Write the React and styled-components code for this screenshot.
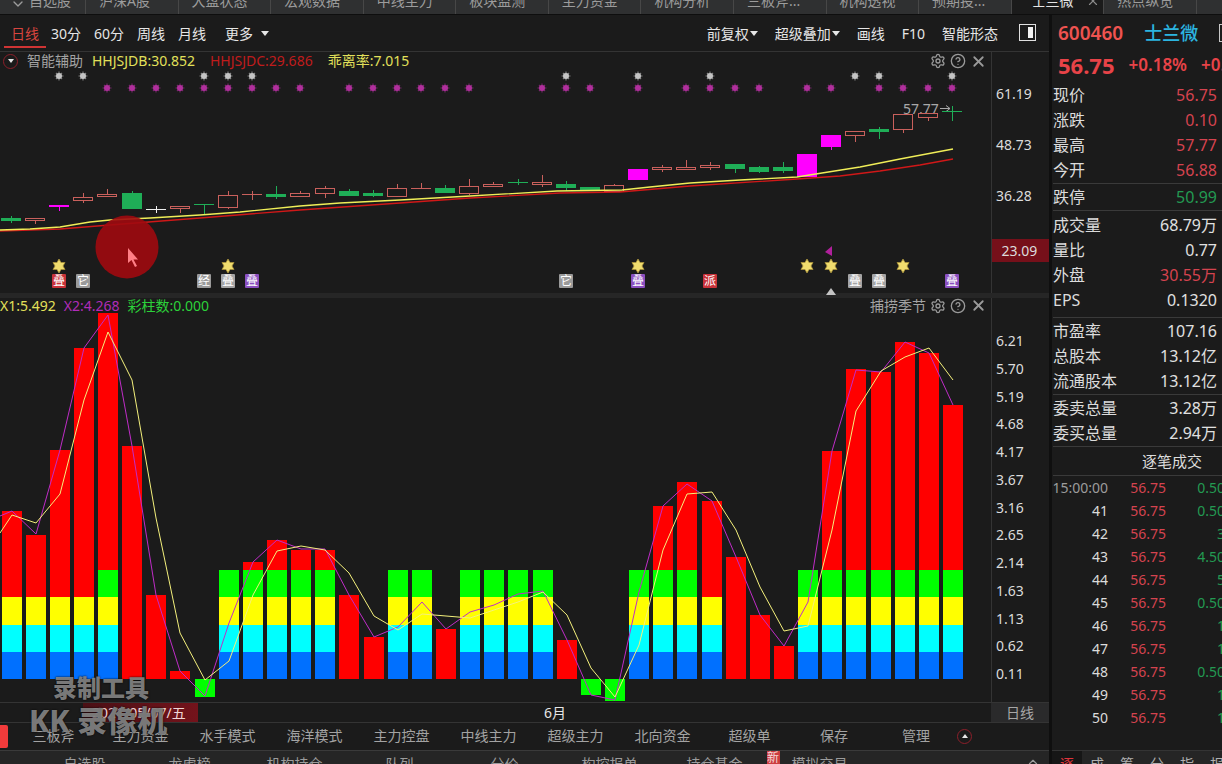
import React from 'react';
import styled, { createGlobalStyle } from 'styled-components';
import { Settings, CircleHelp, X, ChevronDown, ChevronUp } from 'lucide-react';

const GlobalStyle = createGlobalStyle`
    * {
        box-sizing: border-box;
    }
    body {
        margin: 0;
        background: #1b1b1b;
        color: #dcdcdc;
        font-family: "Noto Sans", "Noto Sans CJK SC", sans-serif;
        font-size: 14px;
        line-height: 20px;
        overflow: hidden;
    }
    button {
        border: 0;
        padding: 0;
        background: none;
        color: inherit;
        font: inherit;
        white-space: nowrap;
        cursor: pointer;
    }
`;

const Page = styled.div`
    display: flex;
    flex-direction: column;
    min-height: 100vh;
    overflow: hidden;
`;

const TopTabs = styled.nav`
    display: flex;
    height: 15px;
    overflow: hidden;
    background: #2f3031;
    border-bottom: 1px solid #0e0e0e;
`;

const TopTab = styled.button`
    display: flex;
    align-items: flex-end;
    flex: 0 0 ${({ $first }) => ($first ? '86px' : 'calc(100% / 13.2)')};
    height: 14px;
    padding-left: ${({ $first, $active }) => ($first ? 10 : $active ? 20 : 13)}px;
    border-right: 1px solid #474747;
    line-height: 26px;
    color: ${({ $active }) => ($active ? '#e4e4e4' : '#9c9c9c')};
    background: ${({ $active }) => ($active ? '#1b1b1b' : 'transparent')};
    svg {
        margin: 0 3px 2px 0;
    }
    .close {
        margin: 0 0 6px 12px;
        color: #8c8c8c;
    }
`;

const Main = styled.div`
    display: flex;
    flex: 1;
`;

const Left = styled.main`
    position: relative;
    flex: 1;
    min-width: 0;
`;

const Toolbar = styled.div`
    display: flex;
    align-items: center;
    justify-content: space-between;
    height: 37px;
    padding: 0 13px 0 4px;
    border-bottom: 1px solid #343434;
    color: #e6e6e6;
`;

const Group = styled.div`
    display: flex;
    align-items: center;
    gap: ${({ $gap }) => $gap}px;
`;

const Period = styled.button`
    height: 29px;
    padding: 4px ${({ $active }) => ($active ? 7 : 0)}px 0;
    margin-right: ${({ $active }) => ($active ? -8 : 0)}px;
    color: ${({ $active }) => ($active ? '#d8453f' : 'inherit')};
    border-bottom: 2px solid ${({ $active }) => ($active ? '#cf3434' : 'transparent')};
    line-height: 20px;
`;

const Tool = styled.button`
    display: flex;
    align-items: center;
    gap: 1px;
    padding-top: 1px;
`;

const MoreTool = styled(Tool)`
    gap: 8px;
    padding-left: 6px;
`;

const PanelTool = styled(Tool)`
    padding: 0 0 2px 4px;
`;

const Arrow = styled.span`
    border: 4px solid transparent;
    border-top: 5px solid #e6e6e6;
    border-bottom: 0;
`;

const PanelIcon = styled.span`
    display: flex;
    justify-content: flex-end;
    width: 17px;
    height: 17px;
    padding: 2px;
    border: 1px solid #e0e0e0;
    &::after {
        content: "";
        width: 5px;
        background: #f2f2f2;
    }
`;

const Panel = styled.section`
    display: flex;
    border-bottom: ${({ $divided }) => ($divided ? '5px solid #262626' : '0')};
`;

const Plot = styled.div`
    flex: 1;
    min-width: 0;
`;

const PlotHead = styled.header`
    display: flex;
    align-items: center;
    justify-content: space-between;
    height: ${({ $height }) => $height}px;
    padding: 0 4px ${({ $height }) => ($height > 15 ? 2 : 0)}px ${({ $inset }) => $inset}px;
    line-height: 18px;
`;

const Legend = styled.span`
    color: ${({ $color }) => $color};
    white-space: nowrap;
`;

const HeadButton = styled.button`
    display: flex;
    color: #9a9a9a;
`;

const Chart = styled.svg`
    display: block;
    width: 100%;
    height: auto;
    overflow: visible;
`;

const Round = styled.span`
    display: flex;
    align-items: center;
    justify-content: center;
    width: 15px;
    height: 15px;
    border: 1px solid #8c1f2a;
    border-radius: 50%;
    &::after {
        content: "";
        border: 3px solid transparent;
        border-${({ $up }) => ($up ? 'bottom' : 'top')}: 4px solid #e8e8e8;
        border-${({ $up }) => ($up ? 'top' : 'bottom')}: 0;
    }
`;

const Axis = styled.div`
    position: relative;
    display: flex;
    flex-direction: column;
    justify-content: ${({ $spread }) => ($spread ? 'space-between' : 'flex-start')};
    gap: ${({ $spread }) => ($spread ? 0 : 31)}px;
    width: 58px;
    padding: ${({ $spread }) => ($spread ? '33px 4px 18px' : '32px 4px 0')};
    border-left: 1px solid #343434;
`;

const PriceTag = styled.span`
    position: absolute;
    left: 0;
    right: 0;
    bottom: 31px;
    padding-right: 2px;
    text-align: center;
    line-height: 23px;
    background: #76101a;
`;

const DateBar = styled.div`
    display: flex;
    height: 20px;
    border-top: 1px solid #343434;
`;

const DateTag = styled.span`
    flex: 0 0 115px;
    margin-left: 83px;
    padding-left: 9px;
    background: linear-gradient(90deg, #4a1015, #74131b);
    color: #f0d6d6;
`;

const Month = styled.span`
    flex: 1;
    padding-left: 346px;
    color: #e6e6e6;
`;

const PeriodTag = styled.span`
    flex: 0 0 58px;
    text-align: center;
    color: #a6a6a6;
    background: #2a2a2b;
`;

const Schemes = styled.nav`
    display: flex;
    align-items: center;
    height: 28px;
    padding-bottom: 1px;
    border-top: 1px solid #343434;
    color: #a3a3a3;
`;

const RedMark = styled.span`
    width: 8px;
    height: 23px;
    margin-right: 2px;
    border-radius: 0 2px 2px 0;
    background: #f23b3b;
`;

const Scheme = styled.button`
    flex: 0 0 ${({ $short }) => ($short ? 82 : 87)}px;
`;

const BottomBar = styled.nav`
    display: flex;
    height: 14px;
    overflow: hidden;
    padding-left: 32px;
    border-top: 1px solid #3a3a3a;
    background: #252525;
    color: #9c9c9c;
`;

const BottomTab = styled.button`
    flex: 0 0 105px;
    height: 26px;
`;

const NewBadge = styled.span`
    width: 13px;
    height: 14px;
    margin-right: -13px;
    background: #cc3d3f;
    color: #f4dada;
    font-size: 12px;
    line-height: 14px;
`;

const BarToggle = styled.button`
    height: 26px;
    margin: 0 9px 0 auto;
`;

const Watermark = styled.div`
    position: absolute;
    left: 29px;
    bottom: 25px;
    color: rgba(160, 160, 160, 0.75);
    font-weight: 800;
    font-size: 30px;
    line-height: 36px;
    text-shadow: 0 0 2px #000;
    pointer-events: none;
    small {
        display: block;
        padding-left: 24px;
        font-size: 24px;
        line-height: 30px;
    }
`;

const Side = styled.aside`
    flex: 0 0 173px;
    display: flex;
    flex-direction: column;
    overflow: hidden;
    border-left: 3px solid #0f0f0f;
    white-space: nowrap;
`;

const Stock = styled.div`
    display: flex;
    align-items: center;
    gap: 21px;
    height: 36px;
    padding: 0 0 0 6px;
    font-size: 19px;
    font-weight: 600;
    color: #ef5350;
    b {
        font-size: 18px;
        font-weight: 500;
        color: #2cb5e0;
    }
    i {
        flex: 0 0 18px;
        height: 18px;
        border: 1px solid #c8c8c8;
    }
`;

const Price = styled.div`
    display: flex;
    align-items: center;
    gap: 14px;
    height: 31px;
    padding: 0 0 3px 6px;
    font-size: 17px;
    font-weight: 600;
    color: #e84348;
    strong {
        font-size: 22px;
        font-weight: 700;
    }
`;

const Quotes = styled.dl`
    margin: 0 0 0 1px;
    padding: ${({ $loose }) => ($loose ? '2px 5px 4px 0' : '1px 5px 0 0')};
    border-bottom: 1px solid #3a3a3a;
    font-size: 16px;
    line-height: 25px;
    div {
        display: flex;
        justify-content: space-between;
    }
`;

const Quote = styled.dd`
    margin: 0;
    color: ${({ $tone }) => ({ up: '#d5434f', down: '#239a52' }[$tone] || '#e0e0e0')};
`;

const TickTitle = styled.h2`
    margin: 0 0 0 1px;
    padding-left: 89px;
    border-bottom: 1px solid #3a3a3a;
    font-size: 15px;
    font-weight: 400;
    line-height: 28px;
`;

const Ticks = styled.table`
    width: calc(100% + 3px);
    border-collapse: collapse;
    td {
        height: 23px;
        padding: 0;
        text-align: right;
    }
    td:first-child {
        width: 56px;
    }
    td:nth-child(2) {
        width: 58px;
        color: #d5434f;
    }
    td:last-child {
        color: #239a52;
    }
    tr:first-child td:first-child {
        color: #9c9c9c;
    }
`;

const SideTabs = styled.nav`
    display: flex;
    height: 14px;
    margin-top: auto;
    overflow: hidden;
    border-top: 1px solid #343434;
    background: #252525;
    color: #b0b0b0;
`;

const SideTab = styled.button`
    flex: 0 0 30px;
    height: 26px;
    color: ${({ $active }) => ($active ? '#e0343c' : 'inherit')};
    background: ${({ $active }) => ($active ? '#161616' : 'transparent')};
`;

const topTabs = ['自选股', '沪深A股', '大盘状态', '宏观数据', '中线主力', '板块监测', '主力资金', '机构分析', '三板斧...', '机构透视', '预期投...', '士兰微', '热点纵览'];
const periods = ['日线', '30分', '60分', '周线', '月线'];
const schemes = ['三板斧', '主力资金', '水手模式', '海洋模式', '主力控盘', '中线主力', '超级主力', '北向资金', '超级单', '保存', '管理'];
const bottomTabs = ['自选股', '龙虎榜', '机构持仓', '队列', '分价', '构控报单', '持仓基金'];
const sideTabs = ['逐', '成', '筹', '分', '指', '报'];

const quotes = [
    [['现价', '56.75', 'up'], ['涨跌', '0.10', 'up'], ['最高', '57.77', 'up'], ['今开', '56.88', 'up']],
    [['跌停', '50.99', 'down']],
    [['成交量', '68.79万'], ['量比', '0.77'], ['外盘', '30.55万', 'up'], ['EPS', '0.1320']],
    [['市盈率', '107.16'], ['总股本', '13.12亿'], ['流通股本', '13.12亿']],
    [['委卖总量', '3.28万'], ['委买总量', '2.94万']],
];

const ticks = [
    ['15:00:00', '0.50'], ['41', '0.50'], ['42', '3'], ['43', '4.50'], ['44', '5'], ['45', '0.50'],
    ['46', '1'], ['47', '1'], ['48', '0.50'], ['49', '1'], ['50', '1'],
];

const levels = ['6.21', '5.70', '5.19', '4.68', '4.17', '3.67', '3.16', '2.65', '2.14', '1.63', '1.13', '0.62', '0.11'];

const RED = '#c9605c';
const GREEN = '#1fae57';
const PINK = '#ff00ff';

// kind, body top, body bottom, high, low
const candles = [
    ['g', 218, 221, 216, 223], ['r', 218, 221, 218, 224], ['m', 205, 207, 205, 211], ['r', 197, 201, 193, 203],
    ['r', 194, 197, 189, 197], ['g', 193, 209, 191, 209], ['w', 209, 210, 206, 213], ['r', 206, 209, 206, 213],
    ['g', 204, 205, 204, 214], ['r', 195, 208, 191, 209], ['r', 194, 194, 191, 200], ['g', 194, 197, 186, 199],
    ['r', 193, 197, 191, 197], ['r', 188, 194, 186, 198], ['g', 191, 196, 189, 196], ['g', 193, 196, 190, 197],
    ['r', 188, 197, 184, 197], ['r', 188, 188, 183, 189], ['g', 188, 193, 185, 193], ['r', 186, 194, 179, 195],
    ['r', 184, 187, 182, 187], ['g', 182, 183, 179, 185], ['r', 182, 185, 175, 187], ['g', 184, 188, 181, 191],
    ['g', 187, 190, 187, 190], ['r', 185, 192, 184, 192], ['m', 169, 180, 169, 180], ['r', 167, 170, 165, 172],
    ['r', 167, 170, 160, 170], ['r', 165, 168, 162, 170], ['g', 164, 169, 164, 173], ['g', 167, 172, 166, 173],
    ['g', 167, 171, 162, 173], ['m', 154, 177, 154, 177], ['m', 135, 147, 135, 150], ['r', 131, 136, 131, 142],
    ['g', 129, 132, 127, 139], ['r', 114, 130, 114, 133], ['r', 113, 118, 113, 121], ['g', 111, 112, 106, 121],
];

const greySnow = [2, 3, 8, 9, 10, 23, 26, 29, 35, 36, 39];
const pinkSnow = [4, 5, 6, 7, 8, 9, 10, 11, 12, 14, 15, 16, 17, 18, 19, 22, 23, 24, 26, 28, 29, 30, 31, 33, 34, 36, 37, 38, 39];
const stars = [2, 9, 26, 33, 34, 37];
const badges = [
    [2, '叠', '#c8323a'], [3, '它', '#9a9a9a'], [8, '经', '#9a9a9a'], [9, '叠', '#a4a4a4'], [10, '叠', '#8a4fc0'],
    [23, '它', '#9a9a9a'], [26, '叠', '#8a4fc0'], [29, '派', '#c8323a'], [35, '叠', '#a4a4a4'], [36, '叠', '#a4a4a4'], [39, '叠', '#8a4fc0'],
];

// bar top, number of coloured blocks
const bars = [
    [511, 3], [535, 3], [450, 3], [348, 3], [313, 4], [446, 0], [595, 0], [671, 0], [697, 0], [570, 4],
    [562, 4], [540, 4], [550, 4], [550, 4], [595, 0], [637, 0], [570, 4], [570, 4], [629, 0], [570, 4],
    [570, 4], [570, 4], [570, 4], [640, 0], [695, 0], [701, 0], [570, 4], [506, 4], [482, 4], [501, 3],
    [557, 0], [615, 0], [646, 0], [570, 4], [451, 4], [369, 4], [372, 4], [342, 4], [353, 4], [405, 4],
];
const blocks = [[652, 27, '#0070ff'], [625, 27, '#00ffff'], [597, 28, '#ffff00'], [570, 27, '#00ff00']];
const x2 = [511, 534, 450, 348, 315, 446, 595, 671, 696, 623, 562, 540, 549, 549, 595, 637, 627, 602, 629, 612, 605, 594, 591, 640, 695, 700, 592, 506, 484, 501, 557, 615, 646, 602, 451, 370, 372, 342, 353, 405];
const x1 = [515, 523, 494, 400, 332, 380, 518, 633, 680, 661, 595, 551, 546, 550, 573, 616, 630, 614, 616, 618, 610, 602, 592, 615, 668, 697, 645, 550, 494, 492, 530, 587, 631, 626, 530, 411, 371, 357, 348, 380];

const dayX = (i) => 11 + Math.round(i * 24.12);
const barX = (i) => 12 + Math.floor(i * 24.14);
const toPoints = (list, first) => `0,${first} ` + list.map((y, i) => `${barX(i)},${y}`).join(' ');

const Candle = ({ x, data }) => {
    const [kind, top, bottom, high, low] = data;
    const color = { r: RED, g: GREEN, m: PINK, w: '#f0f0f0' }[kind];
    return (
        <g shapeRendering="crispEdges">
            <line x1={x + 0.5} x2={x + 0.5} y1={high} y2={low} stroke={color} />
            {kind === 'r' ?
                <rect x={x - 9.5} y={top + 0.5} width="19" height={Math.max(bottom - top - 1, 0.01)} fill="#1b1b1b" stroke={color} /> :
                <rect x={x - 10} y={top} width="20" height={bottom - top} fill={color} />}
        </g>
    );
};

const Snow = ({ x, y, color }) => (
    <g stroke={color} strokeWidth="1.2">
        <circle cx={x} cy={y} r="3" fill={color} stroke="none" />
        <path d={`M${x - 4.5} ${y}h9M${x} ${y - 4.5}v9M${x - 3} ${y - 3}l6 6M${x + 3} ${y - 3}l-6 6`} opacity="0.6" />
    </g>
);

const Star = ({ x, y }) => (
    <path
        d={`M${x} ${y - 7}l2 3.5h4l-2 3.5 2 3.5h-4l-2 3.5-2-3.5h-4l2-3.5-2-3.5h4z`}
        fill="#f0dc6e"
        stroke="#a8913a"
        strokeWidth="0.8"
    />
);

const PriceChart = () => (
    <Chart viewBox="0 72 991 221" role="img" aria-label="K线">
        {greySnow.map((i) => <Snow key={i} x={dayX(i)} y={76} color="#c4c4c4" />)}
        {pinkSnow.map((i) => <Snow key={i} x={dayX(i)} y={88} color="#b0309c" />)}
        <text x="903" y="114" fontSize="14" fill="#a8a8a8">57.77</text>
        <path d="M940 108.5h10M946 105.5l4 3-4 3" fill="none" stroke="#a8a8a8" />
        {candles.map((c, i) => <Candle key={i} x={dayX(i)} data={c} />)}
        <polyline
            points="0,231 60,229 110,225 200,218 300,210 400,203 470,198 560,193 620,192 690,186 797,179 840,176 880,171 920,165 953,159"
            fill="none" stroke="#d01818" strokeWidth="1.3"
        />
        <polyline
            points="0,230 30,229 60,227 90,222 110,220 150,218 200,215 240,212 300,206 340,203 400,200 470,196 557,191 622,190 650,187 690,183 740,180 797,177 822,173 860,167 900,159 953,149"
            fill="none" stroke="#f0ee58" strokeWidth="1.3"
        />
        <circle cx="127" cy="247" r="31.5" fill="#a00a10" opacity="0.9" />
        <path d="M128 248v15l3.500-3 3.500 7 2-1-3.500-6.500h4.500z" fill="#ff7f86" />
        {stars.map((i) => <Star key={i} x={dayX(i)} y={266} />)}
        {badges.map(([i, label, color]) => (
            <g key={i}>
                <rect x={dayX(i) - 7} y="274" width="14" height="14" rx="1" fill={color} />
                <text x={dayX(i)} y="285" fontSize="12" textAnchor="middle" fill="#fff">{label}</text>
            </g>
        ))}
        <path d="M832 246v10l-7-4z" fill="#b0209c" />
        <path d="M831 288l5 7h-10z" fill="#c4c4c4" />
    </Chart>
);

const SeasonChart = () => (
    <Chart viewBox="0 313 991 389" role="img" aria-label="捕捞季节">
        <g shapeRendering="crispEdges">
            {bars.map(([top, count], i) => (
                <g key={i}>
                    <rect
                        x={barX(i) - 10} width="20"
                        y={Math.min(top, 679)} height={Math.abs(679 - top)}
                        fill={top > 679 ? '#00ff00' : '#ff0000'}
                    />
                    {blocks.slice(0, count).map(([y, h, color]) => (
                        <rect key={y} x={barX(i) - 10} y={y} width="20" height={h} fill={color} />
                    ))}
                </g>
            ))}
        </g>
        <polyline points={toPoints(x2, 516)} fill="none" stroke="#c02cc8" />
        <polyline points={toPoints(x1, 533)} fill="none" stroke="#f4f07c" />
    </Chart>
);

const HeadTools = ({ title }) => (
    <Group $gap={4}>
        {title && <Legend $color="#a3a3a3">{title}</Legend>}
        <HeadButton aria-label="设置"><Settings size={16} strokeWidth={2} /></HeadButton>
        <HeadButton aria-label="帮助"><CircleHelp size={16} strokeWidth={2} /></HeadButton>
        <HeadButton aria-label="关闭"><X size={17} strokeWidth={2.5} /></HeadButton>
    </Group>
);

const App = () => {
    return (
        <React.Fragment>
            <GlobalStyle />
            <Page>
                <TopTabs>
                    {topTabs.map((name, i) => (
                        <TopTab key={name} $first={i === 0} $active={name === '士兰微'}>
                            {i === 0 && <ChevronDown size={16} />}
                            {name}
                            {name === '士兰微' && <X className="close" size={14} />}
                        </TopTab>
                    ))}
                </TopTabs>
                <Main>
                    <Left>
                        <Toolbar>
                            <Group $gap={13}>
                                {periods.map((name, i) => <Period key={name} $active={i === 0}>{name}</Period>)}
                                <MoreTool>更多<Arrow /></MoreTool>
                            </Group>
                            <Group $gap={17}>
                                <Tool>前复权<Arrow /></Tool>
                                <Tool>超级叠加<Arrow /></Tool>
                                <Tool>画线</Tool>
                                <Tool>F10</Tool>
                                <Tool>智能形态</Tool>
                                <PanelTool aria-label="侧栏"><PanelIcon /></PanelTool>
                            </Group>
                        </Toolbar>
                        <Panel $divided>
                            <Plot>
                                <PlotHead $height={20} $inset={3}>
                                    <Group $gap={15}>
                                        <Group $gap={9}>
                                            <Round />
                                            <Legend $color="#a3a3a3">智能辅助</Legend>
                                            <Legend $color="#e2e05a">HHJSJDB:30.852</Legend>
                                        </Group>
                                        <Legend $color="#c01c1c">HHJSJDC:29.686</Legend>
                                        <Legend $color="#e2e05a">乖离率:7.015</Legend>
                                    </Group>
                                    <HeadTools />
                                </PlotHead>
                                <PriceChart />
                            </Plot>
                            <Axis>
                                <span>61.19</span>
                                <span>48.73</span>
                                <span>36.28</span>
                                <PriceTag>23.09</PriceTag>
                            </Axis>
                        </Panel>
                        <Panel>
                            <Plot>
                                <PlotHead $height={15} $inset={0}>
                                    <Group $gap={8}>
                                        <Legend $color="#e2e05a">X1:5.492</Legend>
                                        <Legend $color="#b02cb8">X2:4.268</Legend>
                                        <Legend $color="#2cd23a">彩柱数:0.000</Legend>
                                    </Group>
                                    <HeadTools title="捕捞季节" />
                                </PlotHead>
                                <SeasonChart />
                            </Plot>
                            <Axis $spread>
                                {levels.map((level) => <span key={level}>{level}</span>)}
                            </Axis>
                        </Panel>
                        <DateBar>
                            <DateTag>2021/05/07/五</DateTag>
                            <Month>6月</Month>
                            <PeriodTag>日线</PeriodTag>
                        </DateBar>
                        <Schemes>
                            <RedMark />
                            {schemes.map((name, i) => <Scheme key={name} $short={i > 8}>{name}</Scheme>)}
                            <button aria-label="展开"><Round $up /></button>
                        </Schemes>
                        <BottomBar>
                            {bottomTabs.map((name) => <BottomTab key={name}>{name}</BottomTab>)}
                            <NewBadge>新</NewBadge>
                            <BottomTab>模拟交易</BottomTab>
                            <BarToggle aria-label="收起"><ChevronUp size={14} /></BarToggle>
                        </BottomBar>
                        <Watermark>
                            <small>录制工具</small>
                            KK 录像机
                        </Watermark>
                    </Left>
                    <Side>
                        <Stock>600460<b>士兰微</b><i /></Stock>
                        <Price><strong>56.75</strong><span>+0.18%</span><span>+0.10</span></Price>
                        {quotes.map((group, i) => (
                            <Quotes key={i} $loose={i === 2}>
                                {group.map(([label, value, tone]) => (
                                    <div key={label}><dt>{label}</dt><Quote $tone={tone}>{value}</Quote></div>
                                ))}
                            </Quotes>
                        ))}
                        <TickTitle>逐笔成交</TickTitle>
                        <Ticks>
                            <tbody>
                                {ticks.map(([time, volume]) => (
                                    <tr key={time}><td>{time}</td><td>56.75</td><td>{volume}</td></tr>
                                ))}
                            </tbody>
                        </Ticks>
                        <SideTabs>
                            {sideTabs.map((name, i) => <SideTab key={name} $active={i === 0}>{name}</SideTab>)}
                        </SideTabs>
                    </Side>
                </Main>
            </Page>
        </React.Fragment>
    );
};

export default App;
